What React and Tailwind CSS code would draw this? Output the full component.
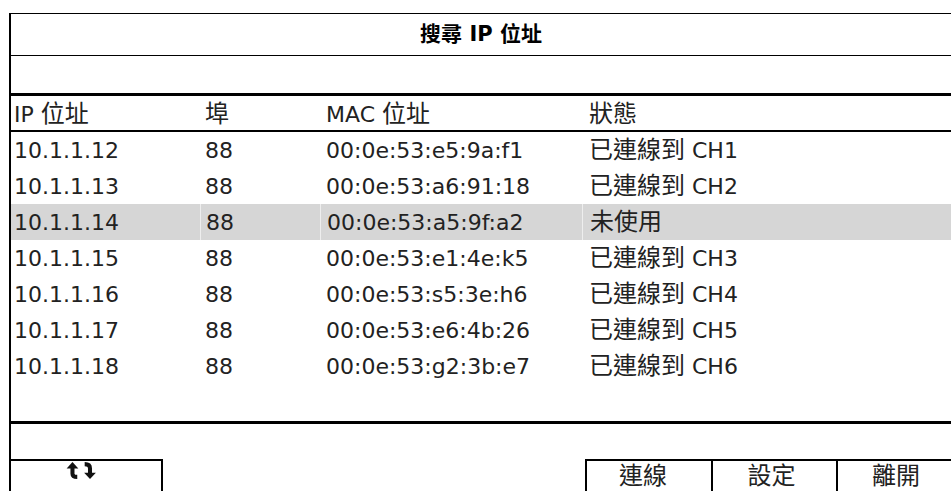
import React from "react";

const rows = [
  { ip: "10.1.1.12", port: "88", mac: "00:0e:53:e5:9a:f1", status: "已連線到 CH1" },
  { ip: "10.1.1.13", port: "88", mac: "00:0e:53:a6:91:18", status: "已連線到 CH2" },
  { ip: "10.1.1.14", port: "88", mac: "00:0e:53:a5:9f:a2", status: "未使用", selected: true },
  { ip: "10.1.1.15", port: "88", mac: "00:0e:53:e1:4e:k5", status: "已連線到 CH3" },
  { ip: "10.1.1.16", port: "88", mac: "00:0e:53:s5:3e:h6", status: "已連線到 CH4" },
  { ip: "10.1.1.17", port: "88", mac: "00:0e:53:e6:4b:26", status: "已連線到 CH5" },
  { ip: "10.1.1.18", port: "88", mac: "00:0e:53:g2:3b:e7", status: "已連線到 CH6" },
];

const font = {
  fontFamily: '"DejaVu Sans", "Noto Sans CJK TC", sans-serif',
};

// CJK glyphs in the original UI are a touch larger than the latin ones
const Mixed = ({ text }) =>
  text.split(/([\u4e00-\u9fff]+)/).map((part, i) =>
    /[\u4e00-\u9fff]/.test(part) ? (
      <span key={i} className="text-[24px]">
        {part}
      </span>
    ) : (
      <span key={i} className="whitespace-pre">
        {part}
      </span>
    )
  );

const SwapIcon = () => (
  <svg width="35" height="17" viewBox="1.5 0 29 16">
    <polygon points="2,6 7.5,0 13,6" fill="#111" />
    <path d="M7.5 4 V11 Q7.5 14 12 14" stroke="#111" strokeWidth="3.8" fill="none" />
    <path d="M19 2 Q24 2 24 6 V11" stroke="#111" strokeWidth="3.8" fill="none" />
    <polygon points="18.5,10 24,16 29.5,10" fill="#111" />
  </svg>
);

const Row = ({ r, header }) => (
  <div
    className={`grid grid-cols-[189px_120px_262px_1fr] h-[36px] items-center text-[22px] ${
      r.selected ? "bg-[#d6d6d6]" : ""
    } ${header ? "border-b-2 border-black" : ""}`}
  >
    <div className="pl-[3px] h-full flex items-center">
      <Mixed text={r.ip} />
    </div>
    <div className={`pl-[5px] h-full flex items-center ${r.selected ? "border-l border-[#eeeeee]" : ""}`}>
      <Mixed text={r.port} />
    </div>
    <div className={`pl-[6px] h-full flex items-center ${r.selected ? "border-l border-[#eeeeee]" : ""}`}>
      <Mixed text={r.mac} />
    </div>
    <div className={`pl-[7px] h-full flex items-center ${r.selected ? "border-l border-[#eeeeee]" : ""}`}>
      <Mixed text={r.status} />
    </div>
  </div>
);

export default function App() {
  return (
    <div className="w-[951px] h-[491px] bg-white overflow-hidden text-[#222222] pt-[13px]" style={font}>
      <div className="ml-[9px] border-l-2 border-t border-black flex flex-col">
        <div className="h-[42px] border-b border-black flex items-center justify-center text-[21px] font-bold text-black">
          搜尋 IP 位址
        </div>
        <div className="h-[40px] border-b-[3px] border-black" />
        <Row header r={{ ip: "IP 位址", port: "埠", mac: "MAC 位址", status: "狀態" }} />
        {rows.map((r) => (
          <Row key={r.ip} r={r} />
        ))}
        <div className="h-[40px] border-b-[3px] border-black" />
        <div className="h-[35px]" />
        <div className="flex h-[40px] text-[24px] leading-[30px]">
          <div className="w-[152px] shrink-0 border-t-2 border-r-2 border-black flex items-start justify-center pt-[1px] pr-[10px]">
            <SwapIcon />
          </div>
          <div className="w-[422px] shrink-0" />
          <div className="w-[126px] shrink-0 border-t-2 border-l-2 border-black flex items-start justify-center pr-[12px]">
            連線
          </div>
          <div className="w-[125px] shrink-0 border-t-2 border-l-2 border-black flex items-start justify-center pr-[6px]">
            設定
          </div>
          <div className="w-[130px] shrink-0 border-t-2 border-l-2 border-black flex items-start justify-center pr-[12px]">
            離開
          </div>
        </div>
      </div>
    </div>
  );
}
